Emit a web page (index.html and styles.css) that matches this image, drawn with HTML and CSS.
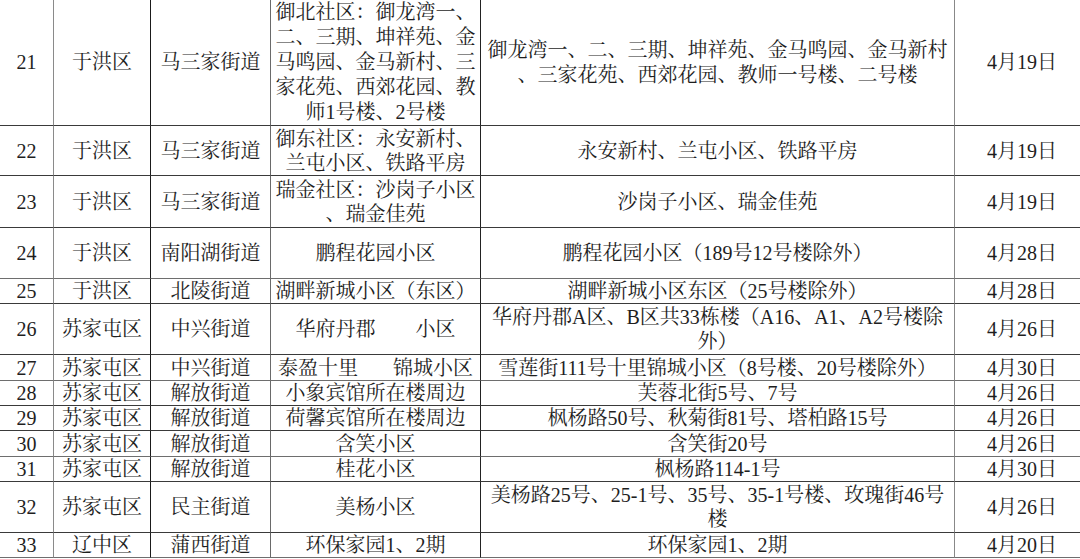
FILE: index.html
```html
<!DOCTYPE html>
<html lang="zh-CN">
<head>
<meta charset="utf-8">
<title>封控区域</title>
<link rel="stylesheet" href="styles.css">
</head>
<body>
<table class="sheet">
  <colgroup>
    <col class="c-no">
    <col class="c-dist">
    <col class="c-street">
    <col class="c-comm">
    <col class="c-range">
    <col class="c-date">
  </colgroup>
  <tbody>
    <tr class="r125 loose">
      <td class="no">21</td><td class="dist">于洪区</td><td class="street">马三家街道</td>
      <td class="comm">御北社区：御龙湾一、<br>二、三期、坤祥苑、金<br>马鸣园、金马新村、三<br>家花苑、西郊花园、教<br>师1号楼、2号楼</td>
      <td class="range">御龙湾一、二、三期、坤祥苑、金马鸣园、金马新村<br>、三家花苑、西郊花园、教师一号楼、二号楼</td>
      <td class="date">4月19日</td>
    </tr>
    <tr class="r50">
      <td class="no">22</td><td class="dist">于洪区</td><td class="street">马三家街道</td>
      <td class="comm">御东社区：永安新村、<br>兰屯小区、铁路平房</td>
      <td class="range">永安新村、兰屯小区、铁路平房</td>
      <td class="date">4月19日</td>
    </tr>
    <tr class="r52">
      <td class="no">23</td><td class="dist">于洪区</td><td class="street">马三家街道</td>
      <td class="comm">瑞金社区：沙岗子小区<br>、瑞金佳苑</td>
      <td class="range">沙岗子小区、瑞金佳苑</td>
      <td class="date">4月19日</td>
    </tr>
    <tr class="r51 lightline">
      <td class="no">24</td><td class="dist">于洪区</td><td class="street">南阳湖街道</td>
      <td class="comm">鹏程花园小区</td>
      <td class="range">鹏程花园小区（189号12号楼除外）</td>
      <td class="date">4月28日</td>
    </tr>
    <tr class="r25">
      <td class="no">25</td><td class="dist">于洪区</td><td class="street">北陵街道</td>
      <td class="comm">湖畔新城小区（东区）</td>
      <td class="range">湖畔新城小区东区（25号楼除外）</td>
      <td class="date">4月28日</td>
    </tr>
    <tr class="r51">
      <td class="no">26</td><td class="dist">苏家屯区</td><td class="street">中兴街道</td>
      <td class="comm">华府丹郡　　小区</td>
      <td class="range">华府丹郡A区、B区共33栋楼（A16、A1、A2号楼除<br>外）</td>
      <td class="date">4月26日</td>
    </tr>
    <tr class="r26 lightline">
      <td class="no">27</td><td class="dist">苏家屯区</td><td class="street">中兴街道</td>
      <td class="comm">泰盈十里&nbsp;&nbsp;&nbsp;　锦城小区</td>
      <td class="range">雪莲街111号十里锦城小区（8号楼、20号楼除外）</td>
      <td class="date">4月30日</td>
    </tr>
    <tr class="r25">
      <td class="no">28</td><td class="dist">苏家屯区</td><td class="street">解放街道</td>
      <td class="comm">小象宾馆所在楼周边</td>
      <td class="range">芙蓉北街5号、7号</td>
      <td class="date">4月26日</td>
    </tr>
    <tr class="r25">
      <td class="no">29</td><td class="dist">苏家屯区</td><td class="street">解放街道</td>
      <td class="comm">荷馨宾馆所在楼周边</td>
      <td class="range">枫杨路50号、秋菊街81号、塔柏路15号</td>
      <td class="date">4月26日</td>
    </tr>
    <tr class="r26 lightline">
      <td class="no">30</td><td class="dist">苏家屯区</td><td class="street">解放街道</td>
      <td class="comm">含笑小区</td>
      <td class="range">含笑街20号</td>
      <td class="date">4月26日</td>
    </tr>
    <tr class="r25">
      <td class="no">31</td><td class="dist">苏家屯区</td><td class="street">解放街道</td>
      <td class="comm">桂花小区</td>
      <td class="range">枫杨路114-1号</td>
      <td class="date">4月30日</td>
    </tr>
    <tr class="r51">
      <td class="no">32</td><td class="dist">苏家屯区</td><td class="street">民主街道</td>
      <td class="comm">美杨小区</td>
      <td class="range">美杨路25号、25-1号、35号、35-1号楼、玫瑰街46号<br>楼</td>
      <td class="date">4月26日</td>
    </tr>
    <tr class="r25 lightline">
      <td class="no">33</td><td class="dist">辽中区</td><td class="street">蒲西街道</td>
      <td class="comm">环保家园1、2期</td>
      <td class="range">环保家园1、2期</td>
      <td class="date">4月20日</td>
    </tr>
  </tbody>
</table>
</body>
</html>
```

FILE: styles.css
```css
html, body {
  margin: 0;
  padding: 0;
  background: #ffffff;
}

body {
  width: 1080px;
  height: 559px;
  overflow: hidden;
  font-family: "Liberation Serif", "Noto Serif CJK SC", "Noto Sans CJK SC", serif;
  font-size: 20px;
  color: #1e1e1e;
}

.sheet {
  border-collapse: separate;
  border-spacing: 0;
  table-layout: fixed;
  width: 1090px;
}

.c-no { width: 54px; }
.c-dist { width: 97px; }
.c-street { width: 120px; }
.c-comm { width: 210px; }
.c-range { width: 474px; }
.c-date { width: 135px; }

.sheet td {
  padding: 0;
  text-align: center;
  vertical-align: middle;
  white-space: nowrap;
  line-height: 24px;
  border-bottom: 1px solid #3a3a3a;
  overflow: hidden;
}

.sheet .loose td { line-height: 25px; }

.sheet .lightline td { border-bottom-color: #6e6e6e; }

.sheet td.no { border-right: 1px solid #8a8a8a; }
.sheet td.dist { border-right: 1px solid #1a1a1a; }
.sheet td.street { border-right: 1px solid #6a6a6a; }
.sheet td.comm { border-right: 1px solid #222222; }
.sheet td.range { border-right: 1px solid #888888; }
.sheet td.date { border-right: 1px solid #888888; }

.r125 { height: 125px; }
.r52 { height: 52px; }
.r51 { height: 51px; }
.r50 { height: 50px; }
.r26 { height: 26px; }
.r25 { height: 25px; }
```
